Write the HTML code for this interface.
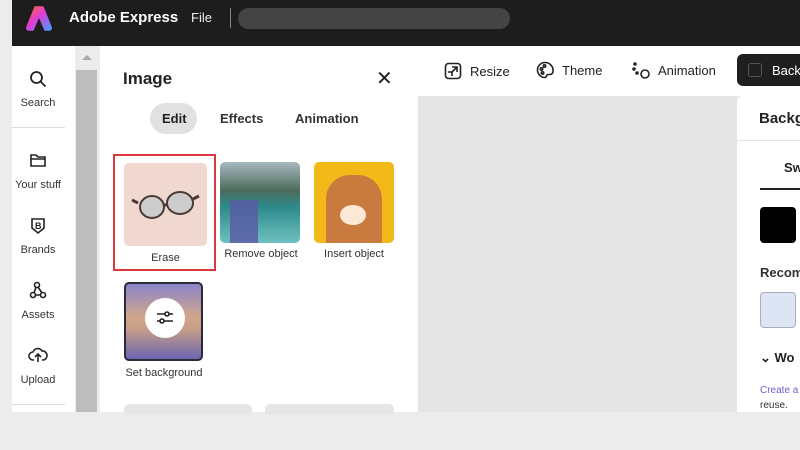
<!DOCTYPE html>
<html><head><style>
*{margin:0;padding:0;box-sizing:border-box}
body{width:800px;height:450px;background:#ececec;font-family:"Liberation Sans",sans-serif;position:relative;overflow:hidden;color:#222}
.a{position:absolute}
.t{font-size:11px;color:#333;text-align:center}
</style></head><body>
<div class="a" style="left:12px;top:0;width:788px;height:46px;background:#1d1d1d"></div>
<svg class="a" style="left:25px;top:5px" width="28" height="26" viewBox="0 0 28 26"><defs><linearGradient id="g" x1="0" y1="0" x2="1" y2="1"><stop offset="0" stop-color="#ff6a2b"/><stop offset=".45" stop-color="#e33bd6"/><stop offset="1" stop-color="#3fa0ff"/></linearGradient></defs><path d="M10 2h8l8 20q1 3-2 3h-4l-6-14-6 14H4q-3 0-2-3z" fill="url(#g)" stroke="url(#g)" stroke-linejoin="round" stroke-width="1.5"/></svg>
<div class="a" style="left:69px;top:9px;color:#fff;font-weight:bold;font-size:15px">Adobe Express</div>
<div class="a" style="left:191px;top:10px;color:#eee;font-size:13px">File</div>
<div class="a" style="left:230px;top:8px;width:1px;height:20px;background:#888"></div>
<div class="a" style="left:238px;top:8px;width:272px;height:21px;border-radius:11px;background:#444"></div>

<div class="a" style="left:12px;top:46px;width:63px;height:366px;background:#fff"></div>
<div class="a" style="left:12px;top:127px;width:53px;height:1px;background:#ddd"></div>
<div class="a" style="left:12px;top:404px;width:53px;height:1px;background:#ddd"></div>
<svg class="a" style="left:29px;top:70px" width="18" height="18" fill="none" stroke="#222" stroke-width="1.8"><circle cx="7.5" cy="7.5" r="5.5"/><path d="M11.5 11.5l5 5"/></svg>
<div class="a t" style="left:12px;top:97px;width:52px">Search</div>
<svg class="a" style="left:29px;top:152px" width="18" height="16" fill="none" stroke="#222" stroke-width="1.6"><path d="M2 3h5l2 2h7v9H2z M2 7h14"/></svg>
<div class="a t" style="left:12px;top:179px;width:52px">Your stuff</div>
<svg class="a" style="left:29px;top:217px" width="18" height="18" fill="none" stroke="#222" stroke-width="1.6"><path d="M3 2h12v9l-6 5-6-5z"/><text x="6" y="12" font-size="9" font-weight="bold" fill="#222" stroke="none" font-family="Liberation Sans">B</text></svg>
<div class="a t" style="left:12px;top:244px;width:52px">Brands</div>
<svg class="a" style="left:29px;top:281px" width="18" height="18" fill="none" stroke="#222" stroke-width="1.6"><circle cx="8" cy="4" r="2.5"/><circle cx="4" cy="14" r="2.5"/><circle cx="14" cy="14" r="2.5"/><path d="M7 6l-2 6M9 6l4 6M6.5 14h5"/></svg>
<div class="a t" style="left:12px;top:309px;width:52px">Assets</div>
<svg class="a" style="left:28px;top:346px" width="20" height="18" fill="none" stroke="#222" stroke-width="1.6"><path d="M6 14H5a4 4 0 010-8 5 5 0 019-1 4 4 0 011 9h-1M10 16V9M7 11l3-3 3 3"/></svg>
<div class="a t" style="left:12px;top:374px;width:52px">Upload</div>

<div class="a" style="left:76px;top:46px;width:21px;height:366px;background:#bdbdbd"></div>
<div class="a" style="left:76px;top:46px;width:21px;height:24px;background:#ececec"></div>
<div class="a" style="left:82px;top:55px;width:0;height:0;border-left:5px solid transparent;border-right:5px solid transparent;border-bottom:5px solid #aaa"></div>

<div class="a" style="left:100px;top:46px;width:318px;height:366px;background:#fff"></div>
<div class="a" style="left:123px;top:69px;font-size:17px;font-weight:bold">Image</div>
<div class="a" style="left:376px;top:66px;font-size:20px">✕</div>
<div class="a" style="left:150px;top:103px;width:47px;height:31px;border-radius:16px;background:#e1e1e1"></div>
<div class="a" style="left:162px;top:111px;font-size:13px;font-weight:bold">Edit</div>
<div class="a" style="left:220px;top:111px;font-size:13px;color:#333;font-weight:bold">Effects</div>
<div class="a" style="left:295px;top:111px;font-size:13px;color:#333;font-weight:bold">Animation</div>

<div class="a" style="left:113px;top:154px;width:103px;height:117px;border:2px solid #d9363e"></div>
<div class="a" style="left:124px;top:163px;width:83px;height:83px;border-radius:5px;background:#f0d8d0"></div>
<svg class="a" style="left:124px;top:163px" width="83" height="83"><ellipse cx="28" cy="44" rx="12" ry="11" fill="#ccc" stroke="#4a3a34" stroke-width="2"/><ellipse cx="56" cy="40" rx="13" ry="11" fill="#ccc" stroke="#4a3a34" stroke-width="2"/><path d="M40 42h3M14 40l-6-3M69 36l6-3" stroke="#4a3a34" stroke-width="3"/></svg>
<div class="a t" style="left:124px;top:252px;width:83px">Erase</div>
<div class="a" style="left:220px;top:162px;width:80px;height:81px;border-radius:5px;background:linear-gradient(180deg,#a8b9c1 0%,#4d6b5a 35%,#2d8a8a 55%,#70c0c0 100%)"></div>
<div class="a" style="left:230px;top:200px;width:28px;height:43px;background:#5a59a5;opacity:.8"></div>
<div class="a t" style="left:218px;top:248px;width:86px">Remove object</div>
<div class="a" style="left:314px;top:162px;width:80px;height:81px;border-radius:5px;background:#f2b918"></div>
<div class="a" style="left:326px;top:175px;width:56px;height:68px;border-radius:24px 24px 0 0;background:#c97a3e"></div>
<div class="a" style="left:340px;top:205px;width:26px;height:20px;border-radius:50%;background:#fbe9d6"></div>
<div class="a t" style="left:310px;top:248px;width:88px">Insert object</div>
<div class="a" style="left:124px;top:282px;width:79px;height:79px;border-radius:5px;border:2px solid #2a2a3a;background:linear-gradient(180deg,#8a85c9 0%,#d2a68a 45%,#c59d88 60%,#6d65b0 100%)"></div>
<div class="a" style="left:145px;top:298px;width:40px;height:40px;border-radius:50%;background:#fff"></div>
<svg class="a" style="left:155px;top:309px" width="20" height="18" fill="none" stroke="#222" stroke-width="1.6"><path d="M2 5h16M2 12h16"/><circle cx="12" cy="5" r="2" fill="#fff"/><circle cx="7" cy="12" r="2" fill="#fff"/></svg>
<div class="a t" style="left:118px;top:367px;width:92px">Set background</div>
<div class="a" style="left:124px;top:404px;width:128px;height:10px;border-radius:5px 5px 0 0;background:#e6e6e6"></div>
<div class="a" style="left:265px;top:404px;width:129px;height:10px;border-radius:5px 5px 0 0;background:#e6e6e6"></div>

<div class="a" style="left:418px;top:46px;width:382px;height:50px;background:#fff"></div>
<div class="a" style="left:418px;top:96px;width:319px;height:316px;background:#e5e5e5"></div>
<svg class="a" style="left:444px;top:62px" width="18" height="18" fill="none" stroke="#222" stroke-width="1.6"><rect x="1.5" y="1.5" width="15" height="15" rx="3"/><path d="M8 5h5v5M13 5l-6 6M4 10h4v4"/></svg>
<div class="a" style="left:470px;top:64px;font-size:13px">Resize</div>
<svg class="a" style="left:536px;top:61px" width="18" height="18" fill="none" stroke="#222" stroke-width="1.6"><path d="M9 1.5a7.5 7.5 0 100 15c2 0 1-3 3-3h2a3 3 0 003-3A8 8 0 009 1.5z"/><circle cx="5.5" cy="8" r="1.2"/><circle cx="8.5" cy="5" r="1.2"/><circle cx="6.5" cy="12" r="1.2"/></svg>
<div class="a" style="left:562px;top:63px;font-size:13px">Theme</div>
<svg class="a" style="left:631px;top:61px" width="20" height="20" fill="none" stroke="#222" stroke-width="1.6"><circle cx="14" cy="13" r="4"/><circle cx="4" cy="3" r="1"/><circle cx="3" cy="8" r="1"/><circle cx="6" cy="12" r="1"/></svg>
<div class="a" style="left:658px;top:63px;font-size:13px">Animation</div>
<div class="a" style="left:737px;top:54px;width:70px;height:32px;border-radius:6px;background:#1f1f1f"></div>
<div class="a" style="left:748px;top:63px;width:14px;height:14px;border-radius:3px;border:1.5px solid #555"></div>
<div class="a" style="left:772px;top:63px;font-size:13px;color:#fff">Back</div>

<div class="a" style="left:737px;top:96px;width:63px;height:316px;background:#fff;border-radius:6px 0 0 0"></div>
<div class="a" style="left:737px;top:140px;width:63px;height:1px;background:#e3e3e3"></div>
<div class="a" style="left:759px;top:110px;font-size:15px;font-weight:bold">Backg</div>
<div class="a" style="left:784px;top:160px;font-size:13px;font-weight:bold">Sw</div>
<div class="a" style="left:760px;top:188px;width:40px;height:2px;background:#222"></div>
<div class="a" style="left:760px;top:207px;width:36px;height:36px;border-radius:4px;background:#000"></div>
<div class="a" style="left:760px;top:265px;font-size:13px;font-weight:bold;color:#333">Recom</div>
<div class="a" style="left:760px;top:292px;width:36px;height:36px;border-radius:4px;background:#dde4f3;border:1px solid #aab"></div>
<div class="a" style="left:760px;top:350px;font-size:13px;font-weight:bold">⌄ Wo</div>
<div class="a" style="left:760px;top:385px;font-size:10px;color:#6a5fd0">Create a</div>
<div class="a" style="left:760px;top:400px;font-size:10px;color:#333">reuse.</div>
</body></html>
